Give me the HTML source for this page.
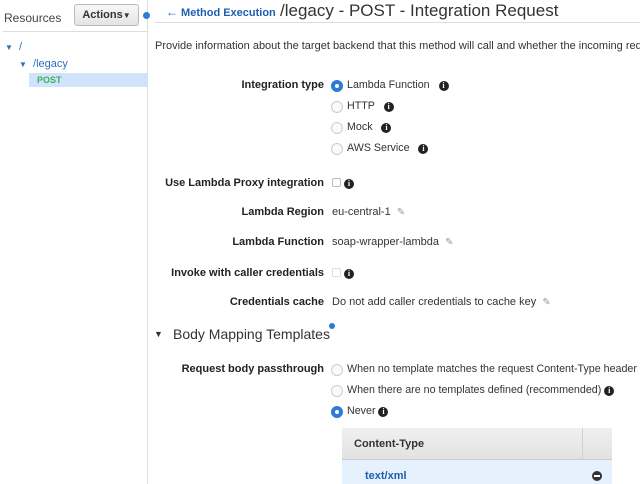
<!DOCTYPE html>
<html><head><style>
*{margin:0;padding:0;box-sizing:border-box}
body{width:640px;height:484px;overflow:hidden;background:#fff;font-family:"Liberation Sans",sans-serif;font-size:11px;color:#333;position:relative}
.a,.t,.lbl{white-space:nowrap}
.a{position:absolute}
.lbl{position:absolute;right:316px;font-weight:bold;color:#222;font-size:11px}
.r{position:absolute;left:331px;width:12px;height:12px;border:1px solid #ccc;border-radius:50%;background:#fafafa}
.r.on{background:#2e7bd6;border-color:#2e7bd6}
.r.on::after{content:"";position:absolute;left:3px;top:3px;width:4px;height:4px;border-radius:50%;background:#fff}
.i{display:inline-block;width:10px;height:10px;border-radius:50%;background:#222;color:#fff;font-size:8px;font-weight:bold;text-align:center;line-height:10px;font-family:"Liberation Serif",serif;vertical-align:0px}
.t{position:absolute;left:347px;font-size:10.7px}
.pen{color:#999;font-size:10px}
</style></head><body>
<div class="a" style="left:4px;top:11px;font-size:12px;color:#444">Resources</div>
<div class="a" style="left:74px;top:4px;width:65px;height:22px;border:1px solid #bbb;border-radius:3px;background:linear-gradient(#f8f8f8,#e4e4e4);font-weight:bold;font-size:11px;text-align:center;line-height:20px;color:#333">Actions<span style="font-size:8px">▼</span></div>
<div class="a" style="left:3px;top:31px;width:144px;border-top:1px solid #ddd"></div>
<div class="a" style="left:147px;top:0;width:1px;height:484px;background:#ddd"></div>
<div class="a" style="left:143px;top:12px;width:7px;height:7px;border-radius:50%;background:#2e7bd6"></div>
<div class="a" style="left:5px;top:41px;color:#2e6fc0;font-size:11px"><span style="font-size:8px">▼</span> &nbsp;/</div>
<div class="a" style="left:19px;top:58px;color:#2e6fc0;font-size:11px"><span style="font-size:8px">▼</span> &nbsp;/legacy</div>
<div class="a" style="left:29px;top:73px;width:118px;height:14px;background:#cfe4fa"></div>
<div class="a" style="left:37px;top:75px;color:#3cb25a;font-weight:bold;font-size:9px">POST</div>
<div class="a" style="left:166px;top:5px;color:#1c5fb0;font-weight:bold;font-size:11px"><span style="font-size:12px">&#x2190;</span> Method Execution</div>
<div class="a" style="left:280px;top:1px;font-size:17px;color:#333">/legacy - POST - Integration Request</div>
<div class="a" style="left:155px;top:22px;width:485px;border-top:1px solid #ddd"></div>
<div class="a" style="left:155px;top:40px;font-size:11px;width:485px;overflow:hidden">Provide information about the target backend that this method will call and whether the incoming request da</div>
<div class="lbl" style="top:79px">Integration type</div>
<div class="r on" style="top:80px"></div><div class="t" style="top:79px">Lambda Function &nbsp; <span class="i">i</span></div>
<div class="r" style="top:101px"></div><div class="t" style="top:100px">HTTP &nbsp; <span class="i">i</span></div>
<div class="r" style="top:122px"></div><div class="t" style="top:121px">Mock &nbsp; <span class="i">i</span></div>
<div class="r" style="top:143px"></div><div class="t" style="top:142px">AWS Service &nbsp; <span class="i">i</span></div>
<div class="lbl" style="top:177px">Use Lambda Proxy integration</div>
<div class="a" style="left:332px;top:178px;width:9px;height:9px;border:1px solid #bbb;border-radius:2px"></div><div class="a" style="left:344px;top:177px"><span class="i">i</span></div>
<div class="lbl" style="top:206px">Lambda Region</div>
<div class="a" style="left:332px;top:206px">eu-central-1 &nbsp;<span class="pen">✎</span></div>
<div class="lbl" style="top:236px">Lambda Function</div>
<div class="a" style="left:332px;top:236px">soap-wrapper-lambda &nbsp;<span class="pen">✎</span></div>
<div class="lbl" style="top:267px">Invoke with caller credentials</div>
<div class="a" style="left:332px;top:268px;width:9px;height:9px;border:1px solid #ddd;border-radius:2px"></div><div class="a" style="left:344px;top:267px"><span class="i">i</span></div>
<div class="lbl" style="top:296px">Credentials cache</div>
<div class="a" style="left:332px;top:296px">Do not add caller credentials to cache key &nbsp;<span class="pen">✎</span></div>
<div class="a" style="left:154px;top:329px;font-size:9px;color:#333">▼</div>
<div class="a" style="left:173px;top:326px;font-size:14px;color:#333">Body Mapping Templates</div>
<div class="a" style="left:329px;top:323px;width:6px;height:6px;border-radius:50%;background:#2e7bd6"></div>
<div class="lbl" style="top:363px">Request body passthrough</div>
<div class="r" style="top:364px"></div><div class="t" style="top:363px">When no template matches the request Content-Type header <span class="i">i</span></div>
<div class="r" style="top:385px"></div><div class="t" style="top:384px">When there are no templates defined (recommended) <span class="i">i</span></div>
<div class="r on" style="top:406px"></div><div class="t" style="top:405px">Never <span class="i">i</span></div>
<div class="a" style="left:342px;top:428px;width:270px;height:32px;background:linear-gradient(#f0f0f0,#e2e2e2);border-bottom:1px solid #ccc"></div>
<div class="a" style="left:582px;top:428px;width:1px;height:32px;background:#d0d0d0"></div>
<div class="a" style="left:354px;top:438px;font-weight:bold;color:#333">Content-Type</div>
<div class="a" style="left:342px;top:460px;width:270px;height:24px;background:#e5f1fd"></div>
<div class="a" style="left:365px;top:470px;font-weight:bold;color:#1c5fb0">text/xml</div>
<div class="a" style="left:592px;top:471px;width:10px;height:10px;border-radius:50%;background:#333"></div>
<div class="a" style="left:594px;top:475px;width:6px;height:2px;background:#fff"></div>
</body></html>
